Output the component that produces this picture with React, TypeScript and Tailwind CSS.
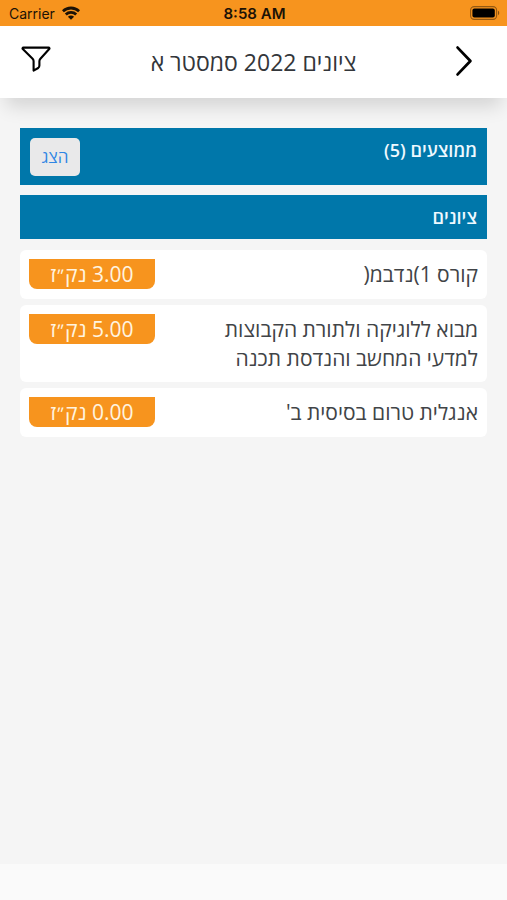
const courses = [
  { name: "קורס 1)נדבמ(", points: "3.00" },
  { name: "מבוא ללוגיקה ולתורת הקבוצות למדעי המחשב והנדסת תכנה", points: "5.00" },
  { name: "אנגלית טרום בסיסית ב'", points: "0.00" },
];

function WifiIcon() {
  return (
    <svg viewBox="0 0 18 14" className="h-[14px] w-[18px]" fill="none" stroke="#1c1206" strokeWidth="2.8" aria-hidden="true">
      <path d="M.9 5.2C5.5.9 12.5.9 17.1 5.2" />
      <path d="M3.8 8.4c2.9-2.8 7.5-2.8 10.4 0" />
      <path d="M5.9 10.7c1.7-1.6 4.5-1.6 6.2 0L9 13.8z" fill="#1c1206" stroke="none" />
    </svg>
  );
}

function BatteryIcon() {
  return (
    <svg viewBox="0 0 30 14" className="h-[14px] w-[30px]" aria-hidden="true">
      <rect x=".6" y=".6" width="26" height="12.8" rx="3.6" fill="none" stroke="#000" strokeOpacity=".4" strokeWidth="1.1" />
      <rect x="2.4" y="2.4" width="22.4" height="9.2" rx="2" fill="#000" />
      <path d="M28 4.8c1.6.6 1.6 3.8 0 4.4z" fill="#000" fillOpacity=".45" />
    </svg>
  );
}

function StatusBar() {
  return (
    <div
      dir="ltr"
      className="grid h-[26px] grid-cols-3 items-center bg-[#f7941e] pr-[7px] pl-[9px] font-['Inter',sans-serif] text-[14px] leading-5 text-[#1c1206]"
    >
      <div className="flex items-center gap-[7px]">
        <span className="pt-px">Carrier</span>
        <WifiIcon />
      </div>
      <span className="pt-px text-center text-[15px] font-semibold">8:58 AM</span>
      <div className="flex justify-end">
        <BatteryIcon />
      </div>
    </div>
  );
}

function Header() {
  return (
    <header className="relative flex h-[72px] items-center justify-between bg-white px-[21px] shadow-[0_14px_18px_-6px_rgba(0,0,0,0.14)]">
      <button type="button" aria-label="חזרה" className="flex w-11 justify-center pb-[2px]">
        <svg viewBox="0 0 18 32" className="h-8 w-[18px]" fill="none" stroke="#000" strokeWidth="2.8" strokeLinecap="round" strokeLinejoin="round">
          <path d="M2.6 2.6 15.4 16 2.6 29.4" />
        </svg>
      </button>
      <h1 className="flex-1 text-center text-[23px] leading-8 text-[#33363a]">ציונים 2022 סמסטר א</h1>
      <button type="button" aria-label="סינון" className="flex w-11 justify-end pb-[6px]">
        <svg viewBox="0 0 30 26" className="h-[26px] w-[30px]" fill="none" stroke="#000" strokeWidth="2.1" strokeLinecap="round" strokeLinejoin="round">
          <path d="M2.4 1.6h25.2c.8 0 1.2.8.6 1.4l-8.8 9.8c-.6.7-1 1.5-1 2.4v4.4c0 1-.4 1.8-1.2 2.4l-4.6 2.6v-9.4c0-.9-.4-1.7-1-2.4L1.8 3c-.6-.6-.2-1.4.6-1.4z" />
        </svg>
      </button>
    </header>
  );
}

export default function App() {
  return (
    <div dir="rtl" className="flex min-h-screen flex-col bg-[#f5f5f5] font-['Open_Sans',sans-serif]">
      <StatusBar />
      <Header />

      <main className="flex-1 px-5 pt-[30px]">
        <section className="flex h-[57px] items-start justify-between bg-[#0077aa] px-[10px] pt-[10px]">
          <h2 className="text-[18px] leading-6 font-semibold text-[#eef9ff]">ממוצעים (5)</h2>
          <button
            type="button"
            className="h-[38px] w-[50px] rounded-[5px] bg-[#e9e9ea] text-[17px] leading-6 text-[#2f86e4]"
          >
            הצג
          </button>
        </section>

        <section>
          <h2 className="mt-[10px] bg-[#0077aa] px-[10px] py-[10px] text-[18px] leading-6 font-semibold text-[#eef9ff]">
            ציונים
          </h2>
          <ul className="mt-[11px] flex flex-col gap-[6px]">
            {courses.map((course) => (
              <li
                key={course.name}
                className="flex items-start justify-between rounded-md bg-white p-[9px] text-[21px] leading-[29px]"
              >
                <span className="max-w-[270px] pt-px text-[#414447]">{course.name}</span>
                <span className="mb-px h-[30px] w-[126px] shrink-0 rounded-b-lg bg-[#f7941e] pt-px text-center text-[#fff4e0]">
                  {course.points} נק<span className="text-[15px] leading-none">״</span>ז
                </span>
              </li>
            ))}
          </ul>
        </section>
      </main>

      <footer className="h-[36px] bg-[#fafafa]" />
    </div>
  );
}
